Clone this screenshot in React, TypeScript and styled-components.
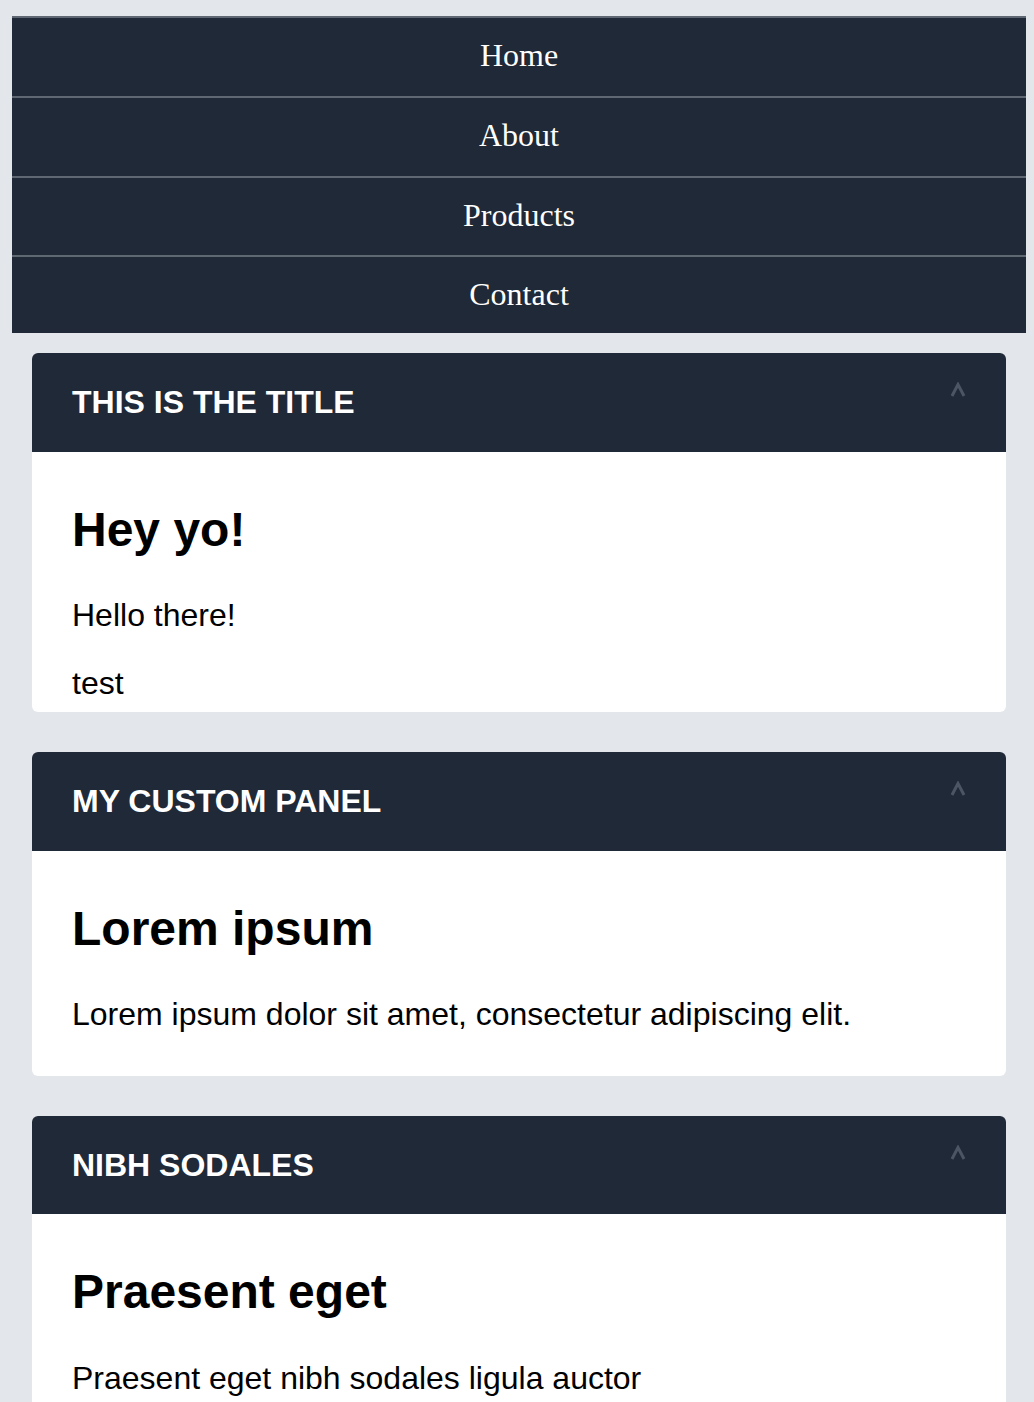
import React from "react";
import styled, { createGlobalStyle } from "styled-components";

const GlobalStyle = createGlobalStyle`
  html, body {
    margin: 0;
    padding: 0;
    background: #e3e6ea;
  }
  body {
    font-family: "Liberation Sans", Arial, sans-serif;
  }
`;

const Page = styled.div`
  padding: 16px 8px 0 12px;
`;

const Nav = styled.nav`
  display: flex;
  flex-direction: column;
  background: #1f2937;
`;

const NavItem = styled.a`
  display: block;
  border-top: 2px solid #5f6773;
  padding: 19px 0 22px;
  text-align: center;
  font-family: "Liberation Serif", "Times New Roman", serif;
  font-size: 32px;
  line-height: 36.8px;
  color: #ffffff;
  text-decoration: none;

  &:last-child {
    padding-bottom: 20px;
  }
`;

const Panels = styled.main`
  display: flex;
  flex-direction: column;
  gap: 40px;
  padding: 20px 20px 0;
`;

const Panel = styled.section`
  border-radius: 6px;
  overflow: hidden;
  background: #ffffff;
`;

const PanelHeader = styled.header`
  display: flex;
  justify-content: space-between;
  align-items: flex-start;
  padding: 31px 40px 31px;
  background: #1f2937;
`;

const PanelTitle = styled.h2`
  margin: 0;
  font-size: 32px;
  line-height: 36.8px;
  font-weight: 700;
  text-transform: uppercase;
  color: #ffffff;
`;

const Chevron = styled.svg`
  display: block;
  width: 16px;
  height: 15px;
  margin-top: -2px;
`;

const PanelBody = styled.div<{ $bottom?: number }>`
  padding: 50px 40px ${(p) => (p.$bottom ?? 43)}px;
  color: #000000;
`;

const Heading = styled.h1`
  margin: 0 0 40px;
  font-size: 48px;
  line-height: 55.2px;
  font-weight: 700;
`;

const Para = styled.p`
  margin: 0 0 31px;
  font-size: 32px;
  line-height: 36.8px;

  &:last-child {
    margin-bottom: 0;
  }
`;

const Caret = () => (
  <Chevron viewBox="0 0 16 15" aria-hidden="true">
    <polyline
      points="2,14 8,2.5 14,14"
      fill="none"
      stroke="#4b5563"
      strokeWidth="3"
      strokeLinejoin="miter"
    />
  </Chevron>
);

type PanelData = {
  title: string;
  heading: string;
  paragraphs: string[];
  bottom?: number;
};

const panels: PanelData[] = [
  {
    title: "This is the title",
    heading: "Hey yo!",
    paragraphs: ["Hello there!", "test"],
    bottom: 10,
  },
  {
    title: "My custom panel",
    heading: "Lorem ipsum",
    paragraphs: ["Lorem ipsum dolor sit amet, consectetur adipiscing elit."],
  },
  {
    title: "Nibh sodales",
    heading: "Praesent eget",
    paragraphs: ["Praesent eget nibh sodales ligula auctor"],
  },
];

export default function App() {
  return (
    <>
      <GlobalStyle />
      <Page>
        <Nav>
          {["Home", "About", "Products", "Contact"].map((l) => (
            <NavItem key={l} href="#">
              {l}
            </NavItem>
          ))}
        </Nav>
        <Panels>
          {panels.map((p) => (
            <Panel key={p.title}>
              <PanelHeader>
                <PanelTitle>{p.title}</PanelTitle>
                <Caret />
              </PanelHeader>
              <PanelBody $bottom={p.bottom}>
                <Heading>{p.heading}</Heading>
                {p.paragraphs.map((t) => (
                  <Para key={t}>{t}</Para>
                ))}
              </PanelBody>
            </Panel>
          ))}
        </Panels>
      </Page>
    </>
  );
}
